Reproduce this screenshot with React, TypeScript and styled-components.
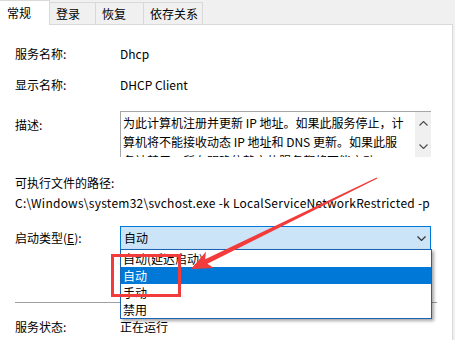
import styled, { createGlobalStyle } from 'styled-components'

const GlobalStyle = createGlobalStyle`
  html, body {
    margin: 0;
    padding: 0;
    background: #f0f0f0;
  }
  body {
    font-family: "Noto Sans CJK SC", "Noto Sans", sans-serif;
    font-size: 12px;
    color: #000;
  }
`

const Window = styled.div`
  position: relative;
  width: 455px;
  height: 340px;
  overflow: hidden;
  background: #f0f0f0;
`

const TabStrip = styled.div`
  position: relative;
  z-index: 1;
  display: flex;
  align-items: flex-end;
  height: 24px;
`

const Tab = styled.div<{ $active?: boolean; $w: number }>`
  box-sizing: border-box;
  width: ${p => p.$w}px;
  height: ${p => (p.$active ? 25 : 22)}px;
  margin-bottom: ${p => (p.$active ? -1 : 0)}px;
  padding-left: ${p => (p.$active ? 7 : 6)}px;
  background: ${p => (p.$active ? '#fff' : '#f0f0f0')};
  border-top: 1px solid #d9d9d9;
  border-right: 1px solid #d9d9d9;
  line-height: ${p => (p.$active ? 23 : 21)}px;
  white-space: nowrap;
`

const Panel = styled.div`
  box-sizing: border-box;
  width: 453px;
  height: 316px;
  padding: 20px 15px 0 15px;
  background: #fff;
  border-top: 1px solid #d9d9d9;
  border-right: 1px solid #d9d9d9;
`

const Field = styled.div<{ $top: number; $align?: string }>`
  display: grid;
  grid-template-columns: 105px 1fr;
  align-items: ${p => p.$align || 'center'};
  margin-top: ${p => p.$top}px;
  line-height: 18px;
`

const Label = styled.div<{ $pad?: number }>`
  padding-top: ${p => p.$pad || 0}px;
  white-space: nowrap;
`

const Value = styled.div`
  white-space: nowrap;
`

const Line = styled.div<{ $top: number; $spread?: boolean }>`
  margin-top: ${p => p.$top}px;
  line-height: 18px;
  white-space: nowrap;
  letter-spacing: ${p => (p.$spread ? '0.25px' : 'normal')};
`

const Description = styled.div`
  display: flex;
  box-sizing: border-box;
  width: 311px;
  height: 46px;
  overflow: hidden;
  border-top: 1px solid #a6a6a6;
  border-left: 1px solid #a6a6a6;
`

const DescText = styled.div`
  flex: 1;
  padding: 1px 0 0 2px;
  line-height: 19px;
  div {
    white-space: nowrap;
  }
`

const ScrollBar = styled.div`
  width: 16px;
  background: #f0f0f0;
  display: flex;
  flex-direction: column;
  align-items: center;
  padding-top: 9px;
  gap: 18px;
`

const Combo = styled.div`
  position: relative;
  box-sizing: border-box;
  width: 311px;
  height: 24px;
  padding: 0 4px 0 3px;
  display: flex;
  align-items: center;
  justify-content: space-between;
  background: #cce4f7;
  border: 1px solid #0078d7;
`

const DropList = styled.div`
  position: absolute;
  z-index: 2;
  top: 100%;
  left: -1px;
  box-sizing: border-box;
  width: 312px;
  background: #fff;
  border: 1px solid #1b64b5;
  box-shadow: 2px 2px 3px rgba(0, 0, 0, 0.35);
`

const Option = styled.div<{ $selected?: boolean }>`
  height: 17px;
  line-height: 17px;
  padding-left: 2px;
  background: ${p => (p.$selected ? '#0078d7' : 'transparent')};
  color: ${p => (p.$selected ? '#fff' : '#000')};
  white-space: nowrap;
`

const Separator = styled.div`
  margin-top: 52px;
  height: 1px;
  background: #a0a0a0;
`

const Overlay = styled.svg`
  position: absolute;
  left: 0;
  top: 0;
  z-index: 5;
  pointer-events: none;
`

const RedBox = styled.div`
  position: absolute;
  z-index: 5;
  left: 111px;
  top: 254px;
  width: 70px;
  height: 43px;
  box-sizing: border-box;
  border: 3px solid #f23b3b;
`

const Chevron = ({ up, color = '#505050' }: { up?: boolean; color?: string }) => (
  <svg width="9" height="5" viewBox="0 0 9 5">
    <polyline
      points={up ? '0.5,4.5 4.5,0.5 8.5,4.5' : '0.5,0.5 4.5,4.5 8.5,0.5'}
      fill="none"
      stroke={color}
      strokeWidth="1.2"
    />
  </svg>
)

const tabs = [
  { name: '常规', w: 50, active: true },
  { name: '登录', w: 46 },
  { name: '恢复', w: 48 },
  { name: '依存关系', w: 59 },
]

const options = ['自动(延迟启动)', '自动', '手动', '禁用']

export default function App() {
  return (
    <>
      <GlobalStyle />
      <Window>
        <TabStrip>
          {tabs.map(t => (
            <Tab key={t.name} $w={t.w} $active={t.active}>
              {t.name}
            </Tab>
          ))}
        </TabStrip>
        <Panel>
          <Field $top={0}>
            <Label>服务名称:</Label>
            <Value>Dhcp</Value>
          </Field>
          <Field $top={13}>
            <Label>显示名称:</Label>
            <Value>DHCP Client</Value>
          </Field>
          <Field $top={17} $align="start">
            <Label $pad={5}>描述:</Label>
            <Description>
              <DescText>
                <div>为此计算机注册并更新 IP 地址。如果此服务停止，计</div>
                <div>算机将不能接收动态 IP 地址和 DNS 更新。如果此服</div>
                <div>务被禁用，所有明确依赖它的服务都将不能启动。</div>
              </DescText>
              <ScrollBar>
                <Chevron up />
                <Chevron />
              </ScrollBar>
            </Description>
          </Field>
          <Line $top={17}>可执行文件的路径:</Line>
          <Line $top={2} $spread>
            C:\Windows\system32\svchost.exe -k LocalServiceNetworkRestricted -p
          </Line>
          <Field $top={14}>
            <Label>
              启动类型(<u>E</u>):
            </Label>
            <Combo>
              <span>自动</span>
              <Chevron color="#333" />
              <DropList>
                {options.map(o => (
                  <Option key={o} $selected={o === '自动'}>
                    {o}
                  </Option>
                ))}
              </DropList>
            </Combo>
          </Field>
          <Separator />
          <Field $top={15}>
            <Label>服务状态:</Label>
            <Value>正在运行</Value>
          </Field>
        </Panel>
        <RedBox />
        <Overlay width="455" height="340" viewBox="0 0 455 340">
          <polygon
            points="191,269 213.8,267.9 207.4,263.8 377.3,178.5 376.7,177.5 205.2,259.3 205.9,251.7"
            fill="#f23b3b"
          />
        </Overlay>
      </Window>
    </>
  )
}
